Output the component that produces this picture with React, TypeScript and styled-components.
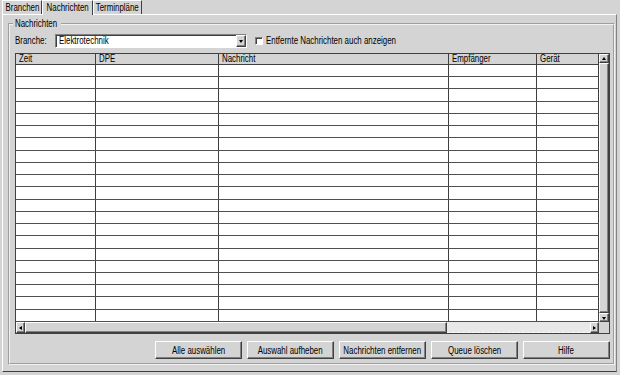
import React from "react";
import styled, { createGlobalStyle } from "styled-components";

const GlobalStyle = createGlobalStyle`
  html, body {
    margin: 0;
    padding: 0;
    background: #d4d4d4;
  }
  body {
    font-family: "Liberation Sans", Arial, sans-serif;
    font-size: 10px;
    color: #000;
  }
  * {
    box-sizing: border-box;
  }
`;

// the reference uses a narrow UI font; Liberation Sans squeezed horizontally
const Narrow = styled.span<{ $origin?: string }>`
  display: inline-block;
  white-space: nowrap;
  transform: scaleX(0.79);
  transform-origin: ${(p) => p.$origin ?? "left"} center;
`;

const Window = styled.div`
  width: 620px;
  height: 375px;
  background: #d4d4d4;
  display: flex;
  flex-direction: column;
  overflow: hidden;
`;

const TabBar = styled.div`
  display: flex;
  height: 14px;
  padding-left: 2px;
  position: relative;
  z-index: 1;
`;

const Tab = styled.div<{ $w: number; $active?: boolean }>`
  width: ${(p) => p.$w}px;
  height: ${(p) => (p.$active ? 15 : 14)}px;
  border-top: 1px solid #fff;
  border-left: 1px solid #fff;
  border-right: 1px solid #404040;
  background: #d4d4d4;
  display: flex;
  align-items: flex-start;
  justify-content: center;
  padding-top: 1px;
  line-height: 12px;
  white-space: nowrap;
`;

const Page = styled.div`
  margin-left: 2px;
  width: 615px;
  height: 358px;
  border-top: 1px solid #fff;
  border-left: 1px solid #fff;
  border-right: 1px solid #808080;
  border-bottom: 1px solid #404040;
  padding: 3px 1px 0 5px;
`;

const Group = styled.fieldset`
  margin: 0;
  width: 607px;
  height: 347px;
  border: 2px groove #f2f2f2;
  padding: 4px 3px 5px 5px;
  min-width: 0;
`;

const Legend = styled.legend`
  padding: 0 1px 0 2px;
  margin-left: -2px;
  line-height: 12px;
  width: 48px;
`;

const FilterRow = styled.div`
  display: flex;
  align-items: center;
  height: 14px;
  margin-bottom: 5px;
`;

const FieldLabel = styled.span`
  width: 40px;
  line-height: 12px;
`;

const Combo = styled.div`
  width: 192px;
  height: 14px;
  background: #fff;
  border-top: 1px solid #808080;
  border-left: 1px solid #808080;
  border-right: 1px solid #fff;
  border-bottom: 1px solid #fff;
  box-shadow: inset 1px 1px 0 #404040;
  display: flex;
  align-items: stretch;
`;

const ComboText = styled.span`
  flex: 1;
  padding-left: 3px;
  line-height: 12px;
`;

const ArrowButton = styled.div<{ $w?: number; $h?: number }>`
  width: ${(p) => p.$w ?? 10}px;
  ${(p) => (p.$h ? `height: ${p.$h}px;` : "")}
  background: #d4d4d4;
  border-top: 1px solid #fff;
  border-left: 1px solid #fff;
  border-right: 1px solid #404040;
  border-bottom: 1px solid #404040;
  box-shadow: inset -1px -1px 0 #808080;
  display: flex;
  align-items: center;
  justify-content: center;
  flex-shrink: 0;
`;

const Triangle = styled.span<{ $dir: "up" | "down" | "left" | "right" }>`
  width: 0;
  height: 0;
  border: 2px solid transparent;
  ${(p) =>
    p.$dir === "down"
      ? "border-top: 3px solid #000; border-bottom: 0; margin-top: 1px;"
      : p.$dir === "up"
      ? "border-bottom: 3px solid #000; border-top: 0; margin-bottom: 1px;"
      : p.$dir === "left"
      ? "border-right: 3px solid #000; border-left: 0;"
      : "border-left: 3px solid #000; border-right: 0;"}
`;

const CheckBox = styled.span`
  width: 8px;
  height: 8px;
  margin-left: 8px;
  background: #fff;
  border-top: 1px solid #808080;
  border-left: 1px solid #808080;
  border-right: 1px solid #fff;
  border-bottom: 1px solid #fff;
  box-shadow: inset 1px 1px 0 #404040;
`;

const CheckLabel = styled.span`
  margin-left: 3px;
  line-height: 12px;
`;

const TableFrame = styled.div`
  width: 595px;
  height: 281px;
  border: 1px solid #404040;
  display: grid;
  grid-template-columns: 583px 10px;
  grid-template-rows: 268px 11px;
`;

const Grid = styled.div`
  display: flex;
  flex-direction: column;
  background: #fff;
`;

const cols = "80px 123px 230px 88px 62px";

const HeaderRow = styled.div`
  display: grid;
  grid-template-columns: ${cols};
  height: 11px;
  background: #d4d4d4;
  border-bottom: 1px solid #404040;
`;

const HeaderCell = styled.div`
  border-right: 1px solid #404040;
  padding-left: 3px;
  line-height: 10px;
  overflow: hidden;
`;

const Body = styled.div`
  flex: 1;
  display: flex;
  flex-direction: column;
`;

const Row = styled.div`
  flex: 1;
  display: grid;
  grid-template-columns: ${cols};
  border-bottom: 1px solid #505050;
`;

const Cell = styled.div`
  border-right: 1px solid #404040;
`;

const VScroll = styled.div`
  display: flex;
  flex-direction: column;
  background: #d4d4d4;
`;

const VThumb = styled.div`
  flex: 1;
  border-top: 1px solid #fff;
  border-left: 1px solid #fff;
  border-right: 1px solid #404040;
  border-bottom: 1px solid #404040;
  box-shadow: inset -1px -1px 0 #808080;
`;

const HScroll = styled.div`
  display: flex;
  background: #d4d4d4;
`;

const HThumb = styled.div`
  width: 422px;
  border-top: 1px solid #fff;
  border-left: 1px solid #fff;
  border-right: 1px solid #404040;
  border-bottom: 1px solid #404040;
  box-shadow: inset -1px -1px 0 #808080;
`;

const HTrack = styled.div`
  flex: 1;
  background: #e8e8e8;
  border-bottom: 1px dashed #fafafa;
`;

const Corner = styled.div`
  background: #d4d4d4;
`;

const ButtonRow = styled.div`
  display: flex;
  justify-content: flex-end;
  gap: 5px;
  margin-top: 7px;
`;

const Button = styled.button`
  width: 87px;
  height: 18px;
  padding: 0;
  font: inherit;
  color: #000;
  background: #d4d4d4;
  border-top: 1px solid #fff;
  border-left: 1px solid #fff;
  border-right: 1px solid #404040;
  border-bottom: 1px solid #404040;
  box-shadow: inset -1px -1px 0 #808080;
  white-space: nowrap;
  display: flex;
  align-items: center;
  justify-content: center;
`;

const tabs = [
  { label: "Branchen", w: 40 },
  { label: "Nachrichten", w: 51, active: true },
  { label: "Terminpläne", w: 49 },
];

const headers = ["Zeit", "DPE", "Nachricht", "Empfänger", "Gerät"];

const buttons = [
  "Alle auswählen",
  "Auswahl aufheben",
  "Nachrichten entfernen",
  "Queue löschen",
  "Hilfe",
];

const rowCount = 21;

const App: React.FC = () => {
  return (
    <Window>
      <GlobalStyle />
      <TabBar>
        {tabs.map((t) => (
          <Tab key={t.label} $w={t.w} $active={t.active}>
            <Narrow $origin="center">{t.label}</Narrow>
          </Tab>
        ))}
      </TabBar>
      <Page>
        <Group>
          <Legend>
            <Narrow>Nachrichten</Narrow>
          </Legend>
          <FilterRow>
            <FieldLabel>
              <Narrow>Branche:</Narrow>
            </FieldLabel>
            <Combo>
              <ComboText>
                <Narrow>Elektrotechnik</Narrow>
              </ComboText>
              <ArrowButton>
                <Triangle $dir="down" />
              </ArrowButton>
            </Combo>
            <CheckBox />
            <CheckLabel>
              <Narrow>Entfernte Nachrichten auch anzeigen</Narrow>
            </CheckLabel>
          </FilterRow>
          <TableFrame>
            <Grid>
              <HeaderRow>
                {headers.map((h) => (
                  <HeaderCell key={h}>
                    <Narrow>{h}</Narrow>
                  </HeaderCell>
                ))}
              </HeaderRow>
              <Body>
                {Array.from({ length: rowCount }).map((_, i) => (
                  <Row key={i}>
                    {headers.map((h) => (
                      <Cell key={h} />
                    ))}
                  </Row>
                ))}
              </Body>
            </Grid>
            <VScroll>
              <ArrowButton $w={10} $h={9}>
                <Triangle $dir="up" />
              </ArrowButton>
              <VThumb />
              <ArrowButton $w={10} $h={9}>
                <Triangle $dir="down" />
              </ArrowButton>
            </VScroll>
            <HScroll>
              <ArrowButton $w={9}>
                <Triangle $dir="left" />
              </ArrowButton>
              <HThumb />
              <HTrack />
              <ArrowButton $w={9}>
                <Triangle $dir="right" />
              </ArrowButton>
            </HScroll>
            <Corner />
          </TableFrame>
          <ButtonRow>
            {buttons.map((b) => (
              <Button key={b}>
                <Narrow $origin="center">{b}</Narrow>
              </Button>
            ))}
          </ButtonRow>
        </Group>
      </Page>
    </Window>
  );
};

export default App;
